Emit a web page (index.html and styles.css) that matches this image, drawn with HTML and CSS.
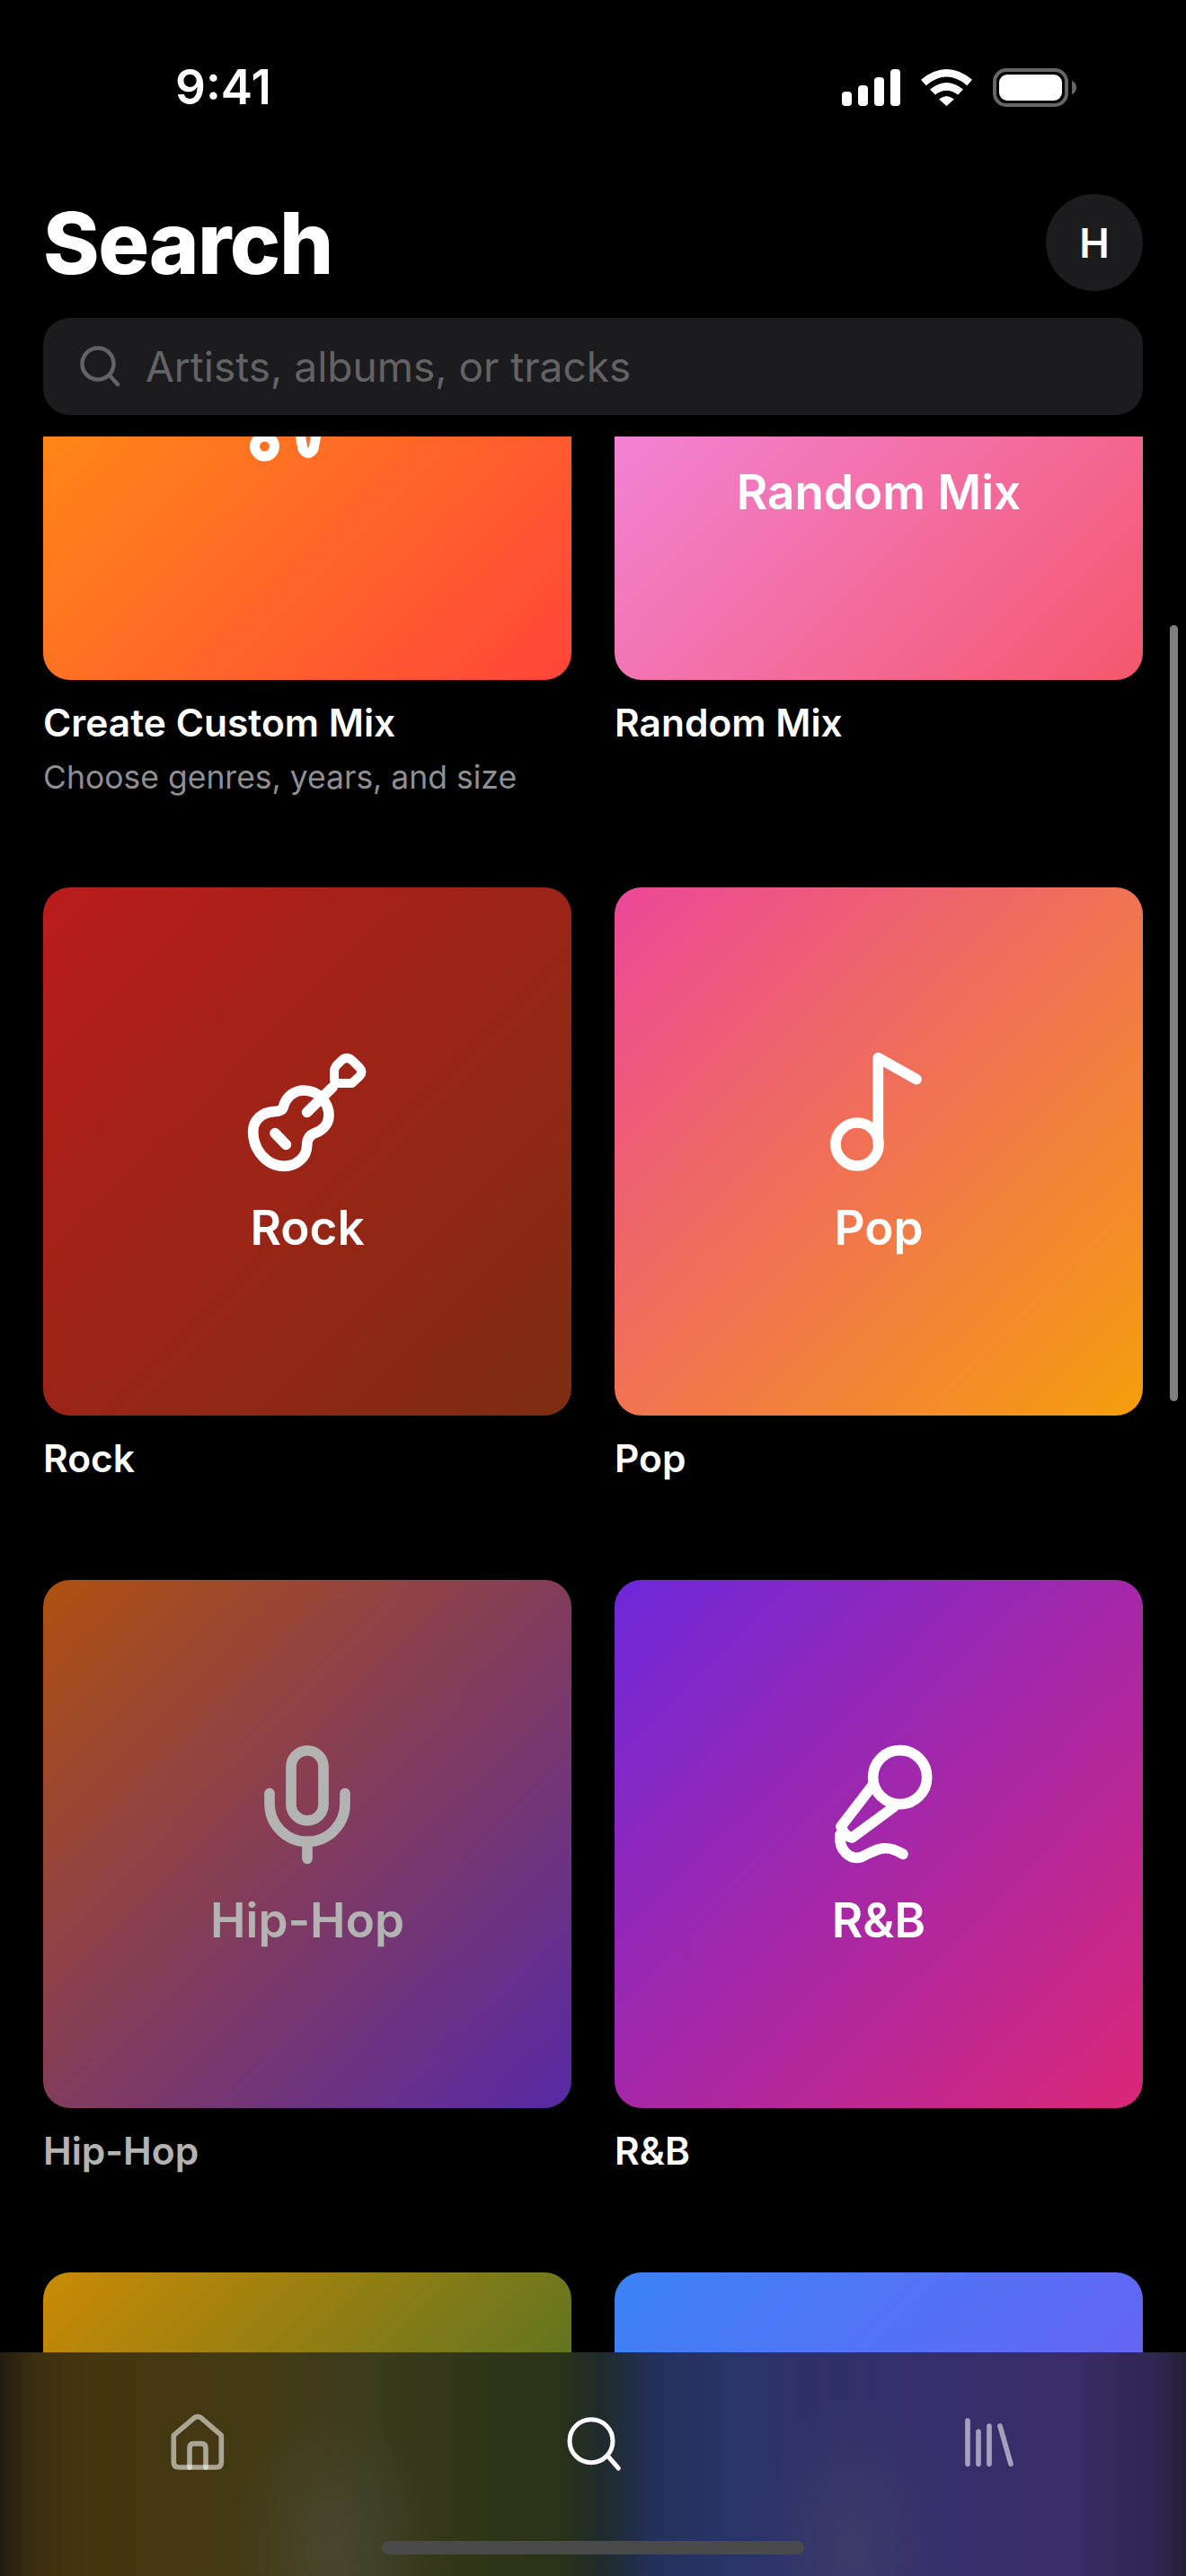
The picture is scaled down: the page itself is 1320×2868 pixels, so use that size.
FILE: index.html
```html
<!DOCTYPE html>
<html lang="en">
<head>
  <meta charset="UTF-8" />
  <meta name="viewport" content="width=device-width, initial-scale=1.0"/>
  <title>Search</title>
  <link rel="stylesheet" href="styles.css">
</head>
<body>
  <div class="screen">
    <div class="status">
      <span class="time">9:41</span>
      <div class="status-icons">
        <svg class="signal" viewBox="0 0 65 41">
          <rect x="0" y="25" width="11" height="16" rx="4"/>
          <rect x="18" y="18" width="11" height="23" rx="4"/>
          <rect x="36" y="9" width="11" height="32" rx="4"/>
          <rect x="54" y="0" width="11" height="41" rx="4"/>
        </svg>
        <svg class="wifi" viewBox="375 78 170 122">
          <path d="M375 113Q460 43 545 113L528 132Q460 75 392 132Z"/>
          <path d="M405 145Q460 100 515 145L498 163Q460 135 422 163Z"/>
          <path d="M435 178Q460 156 485 178L460 200Z"/>
        </svg>
        <svg class="battery" viewBox="0 0 93 43">
          <rect x="2" y="2" width="80" height="39" rx="13" fill="none" stroke="#666" stroke-width="4"/>
          <rect x="7" y="7" width="70" height="29" rx="9" fill="#fff"/>
          <path d="M88 14C91 15 93 18 93 21.500C93 25 91 28 88 29Z" fill="#666"/>
        </svg>
      </div>
    </div>

    <div class="header">
      <h1>Search</h1>
      <div class="avatar">H</div>
    </div>

    <div class="searchbar">
      <svg class="search-icon" viewBox="0 0 46 46">
        <circle cx="21" cy="20" r="17.500"/>
        <path d="M34 33L43 43"/>
      </svg>
      <span class="placeholder">Artists, albums, or tracks</span>
    </div>

    <div class="scroll">
      <div class="grid">
        <div class="item">
          <div class="card g-custom">
            <svg class="mix-icon" viewBox="0 0 160 102">
              <circle cx="32.500" cy="85" r="11"/>
              <path d="M70 60L75 88Q81 97 87 88L92 60"/>
            </svg>
          </div>
          <div class="name">Create Custom Mix</div>
          <div class="sub">Choose genres, years, and size</div>
        </div>

        <div class="item">
          <div class="card g-random">
            <div class="genre-icon"></div>
            <span class="card-label">Random Mix</span>
          </div>
          <div class="name">Random Mix</div>
        </div>

        <div class="item">
          <div class="card g-rock">
            <svg class="genre-icon" viewBox="90 84 432 432">
              <path d="M225 280C235 240 265 222 295 222C345 222 378 265 378 305C378 340 350 358 330 365C312 372 305 385 305 405C305 445 270 475 228 475C170 475 125 420 125 360C125 320 155 295 195 293C212 292 222 288 225 280Z"/>
              <path d="M305 295L390 212"/>
              <path class="head" d="M420 122Q438 106 456 122L480 145Q494 160 480 175L455 198H408Q396 198 396 185V158Q396 148 404 138Z"/>
              <path d="M198 365L235 403"/>
            </svg>
            <span class="card-label">Rock</span>
          </div>
          <div class="name">Rock</div>
        </div>

        <div class="item">
          <div class="card g-pop">
            <svg class="genre-icon" viewBox="78 84 432 432">
              <circle cx="222" cy="402" r="72"/>
              <path d="M292 402V113L420 185"/>
            </svg>
            <span class="card-label">Pop</span>
          </div>
          <div class="name">Pop</div>
        </div>

        <div class="item dimmed">
          <div class="card g-hiphop">
            <svg class="genre-icon" viewBox="90 114 432 432">
              <rect x="252" y="144" width="108" height="234" rx="54"/>
              <path d="M180 287V322A126 126 0 0 0 432 322V287"/>
              <path d="M306 448V505"/>
            </svg>
            <span class="card-label">Hip-Hop</span>
          </div>
          <div class="name">Hip-Hop</div>
        </div>

        <div class="item">
          <div class="card g-rnb">
            <svg class="genre-icon" viewBox="78 114 432 432">
              <circle cx="365" cy="233" r="90"/>
              <path d="M272 262L168 398Q180 430 205 435L345 332"/>
              <path d="M165 425C160 480 200 510 235 500C280 480 310 450 375 490"/>
            </svg>
            <span class="card-label">R&amp;B</span>
          </div>
          <div class="name">R&amp;B</div>
        </div>

        <div class="item">
          <div class="card g-yellow"></div>
        </div>

        <div class="item">
          <div class="card g-blue"></div>
        </div>
      </div>
    </div>

    <div class="scrollbar"></div>

    <div class="tabbar">
      <div class="tab">
        <svg class="tab-icon soft" viewBox="105 70 216 216">
          <path d="M133 155L200 98Q213 88 226 98L292 155V245Q292 262 275 262H150Q133 262 133 245Z"/>
          <path d="M186 262V198Q186 183 200 183H226Q240 183 240 198V262"/>
        </svg>
      </div>
      <div class="tab">
        <svg class="tab-icon active" viewBox="72 70 216 216">
          <circle cx="174" cy="174" r="72"/>
          <path d="M230 225L265 265"/>
        </svg>
      </div>
      <div class="tab">
        <svg class="tab-icon soft" viewBox="132 74 216 216">
          <path d="M171 110V255M207 147V255M243 128V255M279 128L315 255"/>
        </svg>
      </div>
      <div class="homebar"></div>
    </div>
  </div>
</body>
</html>
```

FILE: styles.css
```css
:root {
  --panel: #1c1c1e;
  --muted: #636366;
  --text: #fff;
}
* {
  box-sizing: border-box;
}
body {
  margin: 0;
  background-color: #000;
  color: var(--text);
  font-family: Inter, 'Noto Sans', sans-serif;
}
.screen {
  position: relative;
  display: flex;
  flex-direction: column;
  width: 1320px;
  height: 2868px;
  overflow: hidden;
}
.status {
  display: flex;
  align-items: center;
  justify-content: space-between;
  flex: none;
  height: 194px;
  padding: 0 122px 0 195px;
}
.time {
  font-size: 53px;
  font-weight: 600;
}
.status-icons {
  display: flex;
  align-items: center;
  gap: 23px;
}
.status-icons svg {
  display: block;
  fill: #fff;
}
.signal {
  width: 65px;
  height: 41px;
}
.wifi {
  width: 57px;
  height: 41px;
}
.battery {
  width: 93px;
  height: 43px;
}
.header {
  display: flex;
  align-items: center;
  justify-content: space-between;
  flex: none;
  padding: 22px 48px 0;
}
h1 {
  margin: 0;
  padding-top: 2px;
  font-size: 95px;
  font-weight: 800;
  line-height: 106px;
  letter-spacing: -1.500px;
}
.avatar {
  display: flex;
  align-items: center;
  justify-content: center;
  width: 108px;
  height: 108px;
  border-radius: 50%;
  background-color: var(--panel);
  font-size: 45px;
  font-weight: 600;
}
.searchbar {
  display: flex;
  align-items: center;
  gap: 28px;
  flex: none;
  height: 108px;
  margin: 30px 48px 24px;
  padding: 0 40px;
  border-radius: 30px;
  background-color: var(--panel);
}
.search-icon {
  flex: none;
  width: 46px;
  height: 46px;
  fill: none;
  stroke: var(--muted);
  stroke-width: 4.500;
  stroke-linecap: round;
}
.placeholder {
  color: var(--muted);
  font-size: 46px;
}
.scroll {
  flex: 1;
  min-height: 0;
  overflow: hidden;
}
.grid {
  display: grid;
  grid-template-columns: repeat(2, 1fr);
  gap: 110px 48px;
  margin-top: -317px;
  padding: 0 48px;
}
.card {
  display: flex;
  flex-direction: column;
  align-items: center;
  justify-content: center;
  height: 588px;
  border-radius: 30px;
}
.g-custom { background: linear-gradient(135deg, #ff9f0a, #ff453a); }
.g-random { background: linear-gradient(135deg, #f093fb, #f5576c); }
.g-rock { background: linear-gradient(135deg, #b91c1c, #7c2d12); }
.g-pop { background: linear-gradient(135deg, #ec4899, #f59e0b); }
.g-hiphop { background: linear-gradient(135deg, #f97316, #7c3aed); }
.g-rnb { background: linear-gradient(135deg, #6d28d9, #db2777); }
.g-yellow { background: linear-gradient(135deg, #ca8a04, #166534); }
.g-blue { background: linear-gradient(135deg, #3b82f6, #8450f0); }
.dimmed {
  opacity: 0.7;
}
.genre-icon {
  flex: none;
  width: 144px;
  height: 144px;
  margin-bottom: 26px;
  fill: none;
  stroke: #fff;
  stroke-width: 35;
  stroke-linecap: round;
  stroke-linejoin: round;
}
.genre-icon .head {
  stroke-width: 30;
}
.mix-icon {
  width: 160px;
  height: 102px;
  fill: none;
  stroke: #fff;
  stroke-width: 11;
  stroke-linecap: round;
}
.card-label {
  font-size: 53px;
  font-weight: 600;
  line-height: 58px;
}
.name {
  margin-top: 23px;
  font-size: 42.500px;
  font-weight: 600;
  line-height: 50px;
}
.sub {
  margin-top: 23px;
  color: #8e8e93;
  font-size: 35.500px;
  line-height: 25px;
}
.scrollbar {
  position: absolute;
  top: 696px;
  right: 9px;
  width: 9px;
  height: 864px;
  border-radius: 5px;
  background-color: #808080;
}
.tabbar {
  position: absolute;
  left: 0;
  right: 0;
  bottom: 0;
  display: flex;
  height: 249px;
  padding-top: 64px;
  background:
    radial-gradient(ellipse 110px 170px at 370px 220px, rgba(90, 90, 80, 0.4), transparent),
    radial-gradient(ellipse 110px 170px at 950px 220px, rgba(80, 80, 110, 0.35), transparent),
    linear-gradient(90deg, #231d0f 0, #3c300f 40px, #45360f 100px, #423a15 300px, #3a3a1c 420px, #2f3517 540px, #2a3318 620px, #1f2b2c 670px, #24305c 730px, #2a3468 820px, #2e3168 900px, #352e6a 1050px, #3a2c68 1200px, #2e2550 1290px, #241f33 1320px);
}
.tab {
  display: flex;
  justify-content: center;
  flex: 1;
}
.tab-icon {
  width: 72px;
  height: 72px;
  fill: none;
  stroke-linecap: round;
  stroke-linejoin: round;
}
.tab-icon.soft {
  stroke: #fff;
  stroke-opacity: 0.55;
  stroke-width: 17;
}
.tab-icon.active {
  stroke: #fff;
  stroke-width: 15;
}
.homebar {
  position: absolute;
  left: 425px;
  top: 210px;
  width: 470px;
  height: 15px;
  border-radius: 8px;
  background-color: #4a4a4a;
}
```
